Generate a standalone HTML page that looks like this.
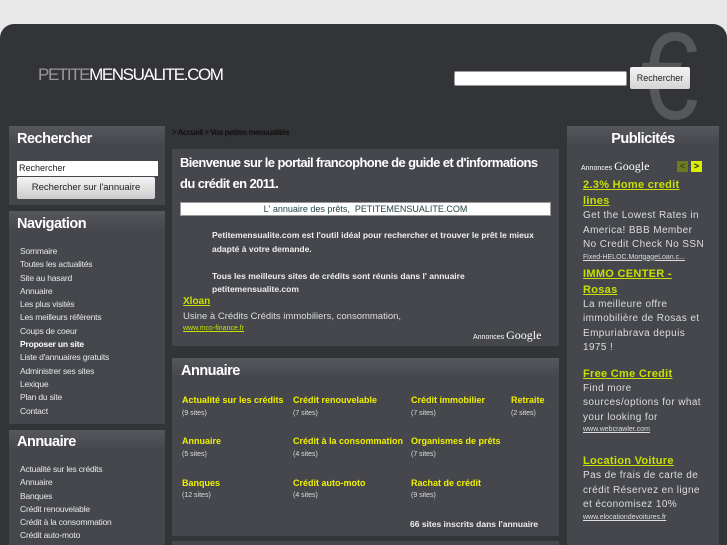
<!DOCTYPE html>
<html style="height:545px;overflow:hidden;background:#333437"><head><meta charset="utf-8"><style>
*{margin:0;padding:0;box-sizing:border-box}
body{width:727px;height:545px;background:#e8e8e8;font-family:"Liberation Sans",sans-serif;overflow:hidden;position:relative}
#wrap{position:absolute;left:0;top:24px;width:727px;height:540px;background:#333437;border-radius:14px 14px 0 0}
.a{position:absolute}
.panel{position:absolute;background:#45474c;background:linear-gradient(#55575c,#45474c 20px)}
.nav a{display:block;color:#e8e8e8;font-size:8.5px;line-height:13.3px;text-decoration:none;letter-spacing:-0.2px}
h2{color:#fff;font-size:14.5px;font-weight:bold;letter-spacing:-0.5px}
.y{color:#f0f000;font-weight:bold;font-size:9px}
.s{color:#ddd;font-size:7px}
.ad a.t{display:block;color:#c8e000;font-weight:bold;font-size:11px;line-height:16px;text-decoration:underline;letter-spacing:0.3px}
.ad p{color:#ddd;font-size:10px;line-height:14.5px;letter-spacing:0.4px}
.ad .u{color:#ddd;font-size:7px;text-decoration:underline;line-height:10px}
</style></head><body>
<div id="wrap"></div>
<div class="a" style="left:640px;top:22px;font-size:124px;color:#55575b;line-height:110px;font-family:'Liberation Sans',sans-serif;transform:scaleX(0.85);transform-origin:left">€</div>
<div class="a" style="left:38px;top:65px;font-size:17px;color:#fff;letter-spacing:-1.4px"><span style="color:#999">PETITE</span>MENSUALITE.COM</div>
<div class="a" style="left:454px;top:71px;width:173px;height:15px;background:#fff;border:1px solid #999;border-radius:2px"></div>
<div class="a" style="left:630px;top:67px;width:60px;height:22px;background:linear-gradient(#f4f4f4,#d4d4d4);border-radius:2px;font-size:9px;line-height:22px;text-align:center;color:#222">Rechercher</div>

<div class="panel" style="left:9px;top:126px;width:156px;height:79px">
<h2 class="a" style="left:8px;top:5px">Rechercher</h2>
<div class="a" style="left:8px;top:35px;width:141px;height:15px;background:#fff;font-size:9px;color:#222;padding-left:2px;line-height:15px">Rechercher</div>
<div class="a" style="left:8px;top:51px;width:138px;height:22px;background:linear-gradient(#f4f4f4,#ccc);border-radius:2px;font-size:9.5px;color:#222;text-align:center;line-height:22px">Rechercher sur l'annuaire</div>
</div>
<div class="panel nav" style="left:9px;top:211px;width:156px;height:213px">
<h2 class="a" style="left:8px;top:5px">Navigation</h2>
<div class="a" style="left:11px;top:34px">
<a>Sommaire</a><a>Toutes les actualités</a><a>Site au hasard</a><a>Annuaire</a><a>Les plus visités</a><a>Les meilleurs référents</a><a>Coups de coeur</a><a style="font-weight:bold;color:#fff">Proposer un site</a><a>Liste d'annuaires gratuits</a><a>Administrer ses sites</a><a>Lexique</a><a>Plan du site</a><a>Contact</a></div>
</div>
<div class="panel nav" style="left:9px;top:430px;width:156px;height:130px">
<h2 class="a" style="left:8px;top:4px">Annuaire</h2>
<div class="a" style="left:11px;top:33px">
<a>Actualité sur les crédits</a><a>Annuaire</a><a>Banques</a><a>Crédit renouvelable</a><a>Crédit à la consommation</a><a>Crédit auto-moto</a></div>
</div>

<div class="a" style="left:172px;top:128px;font-size:8px;color:#111;letter-spacing:-0.5px;font-weight:bold">&gt; Accueil &gt; Vos petites mensualités</div>
<div class="panel" style="left:172px;top:149px;width:387px;height:197px;background:#45474c">
<div class="a" style="left:8px;top:3px;width:385px;color:#fff;font-size:13px;font-weight:bold;line-height:21px;letter-spacing:-0.6px;white-space:nowrap">Bienvenue sur le portail francophone de guide et d'informations<br>du crédit en 2011.</div>
<div class="a" style="left:8px;top:53px;width:371px;height:14px;background:#fff;border:1px solid #999;font-size:9px;color:#244;text-align:center;line-height:12px">L' annuaire des prêts,&nbsp; PETITEMENSUALITE.COM</div>
<div class="a" style="left:40px;top:80px;width:340px;color:#eee;font-size:8.5px;font-weight:bold;line-height:13.5px">Petitemensualite.com est l'outil idéal pour rechercher et trouver le prêt le mieux adapté à votre demande.<br><br>Tous les meilleurs sites de crédits sont réunis dans l' annuaire petitemensualite.com</div>
<div class="a" style="left:11px;top:147px;color:#c8e000;font-weight:bold;font-size:10px;text-decoration:underline">Xloan</div>
<div class="a" style="left:11px;top:162px;color:#ddd;font-size:9.5px">Usine à Crédits Crédits immobiliers, consommation,</div>
<div class="a" style="left:11px;top:176px;color:#c8e000;font-size:7px;text-decoration:underline">www.mco-finance.fr</div>
<div class="a" style="left:301px;top:179px;color:#fff;font-size:7px">Annonces <span style="font-family:'Liberation Serif',serif;font-size:12px">Google</span></div>
</div>
<div class="panel" style="left:172px;top:358px;width:387px;height:178px;background:linear-gradient(#55575c,#45474c 20px)">
<h2 class="a" style="left:9px;top:5px">Annuaire</h2>
<div class="a y" style="left:10px;top:37px">Actualité sur les crédits</div><div class="a s" style="left:10px;top:52px">(9 sites)</div>
<div class="a y" style="left:121px;top:37px">Crédit renouvelable</div><div class="a s" style="left:121px;top:52px">(7 sites)</div>
<div class="a y" style="left:239px;top:37px">Crédit immobilier</div><div class="a s" style="left:239px;top:52px">(7 sites)</div>
<div class="a y" style="left:339px;top:37px">Retraite</div><div class="a s" style="left:339px;top:52px">(2 sites)</div>
<div class="a y" style="left:10px;top:78px">Annuaire</div><div class="a s" style="left:10px;top:93px">(5 sites)</div>
<div class="a y" style="left:121px;top:78px">Crédit à la consommation</div><div class="a s" style="left:121px;top:93px">(4 sites)</div>
<div class="a y" style="left:239px;top:78px">Organismes de prêts</div><div class="a s" style="left:239px;top:93px">(7 sites)</div>
<div class="a y" style="left:10px;top:120px">Banques</div><div class="a s" style="left:10px;top:134px">(12 sites)</div>
<div class="a y" style="left:121px;top:120px">Crédit auto-moto</div><div class="a s" style="left:121px;top:134px">(4 sites)</div>
<div class="a y" style="left:239px;top:120px">Rachat de crédit</div><div class="a s" style="left:239px;top:134px">(9 sites)</div>
<div class="a" style="left:238px;top:161px;color:#eee;font-size:8.5px;font-weight:bold">66 sites inscrits dans l'annuaire</div>
</div>
<div class="a" style="left:172px;top:541px;width:387px;height:10px;background:#45474c"></div>

<div class="panel ad" style="left:567px;top:126px;width:152px;height:430px">
<h2 class="a" style="left:0;width:152px;text-align:center;top:5px">Publicités</h2>
<div class="a" style="left:14px;top:33px;color:#fff;font-size:7px">Annonces <span style="font-family:'Liberation Serif',serif;font-size:12px">Google</span></div>
<div class="a" style="left:110px;top:35px;width:11px;height:11px;background:#6c7a20;color:#222;font-size:9px;line-height:11px;text-align:center">&lt;</div>
<div class="a" style="left:124px;top:35px;width:11px;height:11px;background:#d8f000;color:#222;font-size:9px;font-weight:bold;line-height:11px;text-align:center">&gt;</div>
<div class="a" style="left:16px;top:51px;width:126px">
<a class="t">2.3% Home credit lines</a>
<p>Get the Lowest Rates in America! BBB Member No Credit Check No SSN</p>
<div class="u">Fixed-HELOC.MortgageLoan.c...</div>
<div style="height:3px"></div>
<a class="t">IMMO CENTER - Rosas</a>
<p>La meilleure offre immobilière de Rosas et Empuriabrava depuis 1975 !</p>
<div style="height:10px"></div>
<a class="t">Free Cme Credit</a>
<p>Find more sources/options for what your looking for</p>
<div class="u">www.webcrawler.com</div>
<div style="height:18px"></div>
<a class="t">Location Voiture</a>
<p>Pas de frais de carte de crédit Réservez en ligne et économisez 10%</p>
<div class="u">www.elocationdevoitures.fr</div>
</div>
</div>
</body></html>
